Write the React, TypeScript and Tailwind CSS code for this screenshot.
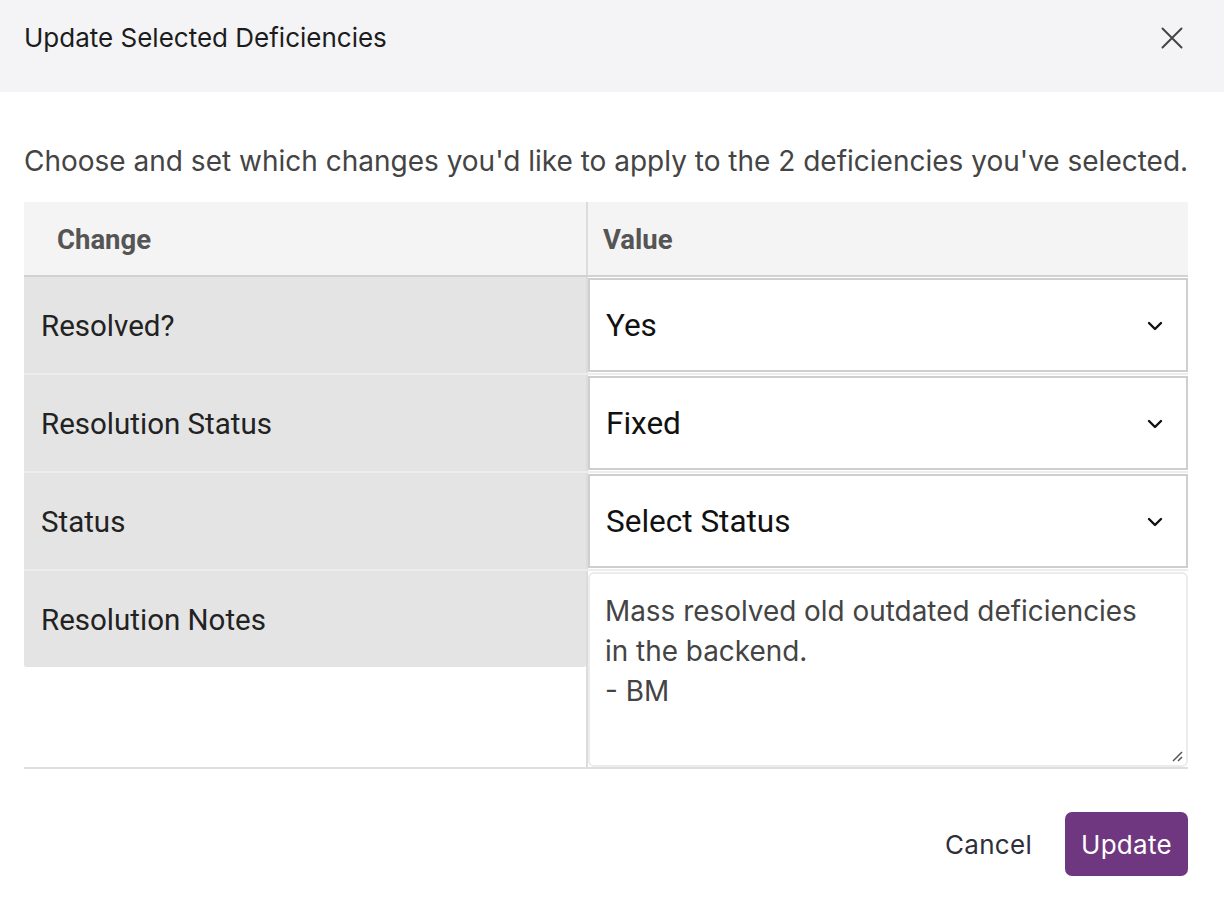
const rows = [
  { label: 'Resolved?', value: 'Yes' },
  { label: 'Resolution Status', value: 'Fixed' },
  { label: 'Status', value: 'Select Status' },
]

function Chevron() {
  return (
    <svg width="16" height="10" viewBox="0 0 16 10" fill="none">
      <path d="M2 2l6 6 6-6" stroke="#111" strokeWidth="2.4" strokeLinecap="round" strokeLinejoin="round" />
    </svg>
  )
}

export default function App() {
  return (
    <div className="w-[1224px] h-[900px] bg-white font-['Inter',sans-serif]">
      {/* header */}
      <div className="h-[92px] bg-[#f4f4f6] pl-6 pr-[41px] flex items-center justify-between">
        <h2 className="text-[26px] text-[#1c1c1c] pb-[17px]">Update Selected Deficiencies</h2>
        <svg className="mb-[17px]" width="22" height="22" viewBox="0 0 22 22" fill="none">
          <path d="M1.5 1.5l19 19M20.5 1.5l-19 19" stroke="#444" strokeWidth="2" strokeLinecap="round" />
        </svg>
      </div>

      <div className="pl-6 pr-[36px]">
        <p className="pt-[53px] text-[28px] leading-[32px] text-[#444] whitespace-nowrap">
          Choose and set which changes you'd like to apply to the 2 deficiencies you've selected.
        </p>

        {/* table */}
        <div className="mt-[25px] font-['Roboto',sans-serif] border-b-2 border-[#dedede]">
          <div className="flex h-[75px] bg-[#f4f4f4] border-b-2 border-[#d2d2d2]">
            <div className="w-[562px] pl-[33px] pt-[3px] flex items-center text-[27.5px] font-bold text-[#555]">Change</div>
            <div className="flex-1 border-l-2 border-[#dcdcdc] pl-[15px] pt-[3px] flex items-center text-[27.5px] font-bold text-[#555]">Value</div>
          </div>

          {rows.map((r) => (
            <div key={r.label} className="flex h-[98px] border-b-2 border-[#ededed]">
              <div className="w-[562px] bg-[#e4e4e4] pl-[17px] pt-[2px] flex items-center text-[29.5px] text-[#222]">
                {r.label}
              </div>
              <div className="flex-1 border-l-2 border-[#dcdcdc] pt-px pb-px">
                <div className="h-full bg-white border-2 border-[#cfcfcf] pl-[16px] pr-[23px] pt-[2px] flex items-center justify-between text-[31.5px] text-[#111]">
                  <span>{r.value}</span>
                  <Chevron />
                </div>
              </div>
            </div>
          ))}

          <div className="flex h-[196px]">
            <div className="w-[562px]">
              <div className="h-[96px] bg-[#e4e4e4] rounded-b-[2px] pl-[17px] pt-[2px] flex items-center text-[29.5px] text-[#222]">
                Resolution Notes
              </div>
            </div>
            <div className="flex-1 border-l-2 border-[#dcdcdc] pt-px">
              <div className="relative h-full bg-white border-2 border-[#ececec] rounded-[6px] px-[15px] pt-[17px] font-['Inter',sans-serif] text-[27.9px] leading-[40px] text-[#444]">
                Mass resolved old outdated deficiencies
                <br />
                in the backend.
                <br />- BM
                <svg className="absolute right-[2px] bottom-[2px]" width="14" height="14" viewBox="0 0 14 14">
                  <path d="M3 12L12 3M8 12l4-4" stroke="#555" strokeWidth="1.5" />
                </svg>
              </div>
            </div>
          </div>
        </div>

        {/* footer */}
        <div className="mt-[43px] flex justify-end items-center gap-[33px]">
          <button className="text-[26px] text-[#2f2f3a] tracking-[0.3px]">Cancel</button>
          <button className="h-[64px] px-[16px] rounded-[7px] bg-[#6f3780] text-white text-[26px] tracking-[0.3px]">Update</button>
        </div>
      </div>
    </div>
  )
}
